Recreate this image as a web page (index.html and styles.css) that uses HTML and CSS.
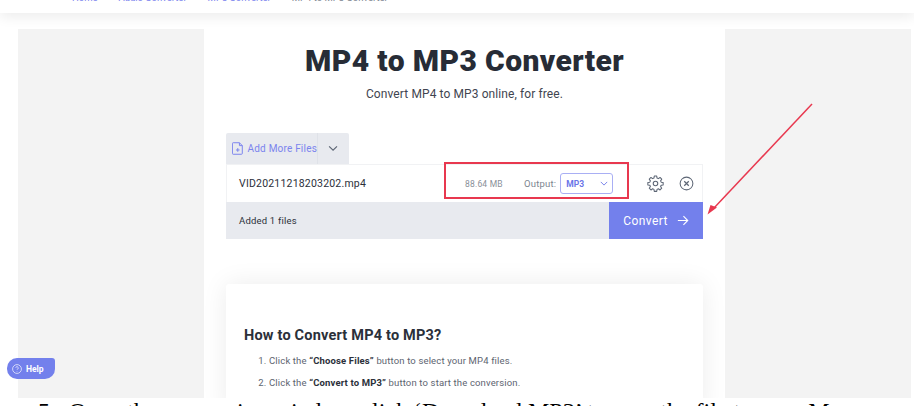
FILE: index.html
```html
<!DOCTYPE html>
<html lang="en">
<head>
  <meta charset="UTF-8" />
  <title>MP4 to MP3 Converter</title>
  <link rel="stylesheet" href="styles.css">
</head>
<body>

  <!-- Top bar, scrolled almost out of view -->
  <header class="topbar">
    <nav class="crumbs">
      <a href="#">Home</a><span>&gt;</span>
      <a href="#">Audio Converter</a><span>&gt;</span>
      <a href="#">MP3 Converter</a><span>&gt;</span>
      <em>MP4 to MP3 Converter</em>
    </nav>
  </header>

  <div class="page">
    <aside class="ad"></aside>

    <main class="center">
      <h1>MP4 to MP3 Converter</h1>
      <p class="sub">Convert MP4 to MP3 online, for free.</p>

      <div class="tool">
        <div class="add-row">
          <div class="add-btn">
            <svg class="add-icon" viewBox="0 0 14 16" width="13" height="15" fill="none" stroke="#7b84ee" stroke-width="1.2">
              <path d="M1.5 1h7.5l3.500 3.500v9.500a1 1 0 0 1-1 1h-10a1 1 0 0 1-1-1v-12a1 1 0 0 1 1-1z"/>
              <path d="M9 1v3.500h3.500M7 7.500v4.500M4.800 9.800h4.400"/>
            </svg>
            <span>Add More Files</span>
          </div>
          <div class="add-more">
            <svg viewBox="0 0 12 8" width="11" height="7" fill="none" stroke="#5d6675" stroke-width="1.3"><path d="M1 1.500l4.500 4.500 4.500-4.500"/></svg>
          </div>
        </div>

        <div class="file-row">
          <span class="file-name">VID20211218203202.mp4</span>
          <span class="file-size">88.64 MB</span>
          <span class="output-label">Output:</span>
          <div class="output-select">
            <b>MP3</b>
            <svg viewBox="0 0 10 6" width="8" height="5" fill="none" stroke="#6a75e8" stroke-width="1.1"><path d="M1 1l4 4 4-4"/></svg>
          </div>
          <svg class="gear" viewBox="0 0 24 24" width="17" height="17" fill="none" stroke="#5d6675" stroke-width="1.500" stroke-linejoin="round">
            <path d="M10.300 2h3.400l.5 2.800 1.800.8 2.400-1.600 2.400 2.400-1.600 2.400.8 1.800 2.800.5v3.400l-2.800.5-.8 1.800 1.600 2.400-2.400 2.400-2.400-1.600-1.800.8-.5 2.800h-3.400l-.5-2.800-1.800-.8-2.400 1.600-2.400-2.400 1.600-2.400-.8-1.800-2.800-.5v-3.400l2.800-.5.8-1.800-1.600-2.400 2.400-2.400 2.400 1.600 1.800-.8z" transform="translate(0 -.5)"/>
            <circle cx="12" cy="12" r="3.200"/>
          </svg>
          <svg class="close" viewBox="0 0 16 16" width="15" height="15" fill="none" stroke="#5d6675" stroke-width="1.100">
            <circle cx="8" cy="8" r="6.800"/>
            <path d="M5.600 5.600l4.800 4.800M10.400 5.600l-4.800 4.800" stroke-width="1.300"/>
          </svg>
        </div>

        <div class="status-row">
          <span>Added 1 files</span>
          <div class="convert-btn">
            Convert
            <svg viewBox="0 0 14 12" width="12" height="11" fill="none" stroke="#fff" stroke-width="1.300"><path d="M1 6h11.500M7.500 1l5 5-5 5"/></svg>
          </div>
        </div>

        <div class="red-box"></div>
      </div>

      <section class="howto">
        <h2>How to Convert MP4 to MP3?</h2>
        <ol>
          <li>Click the <strong>“Choose Files”</strong> button to select your MP4 files.</li>
          <li>Click the <strong>“Convert to MP3”</strong> button to start the conversion.</li>
        </ol>
      </section>
    </main>

    <aside class="ad"></aside>
  </div>

  <p class="doc-line"><span class="doc-num">5.</span>Open the conversion window, click ‘Download MP3’ to save the file to your M</p>

  <!-- Annotation arrow and help tab sit over the page -->
  <svg class="arrow" viewBox="0 0 914 406" width="914" height="406">
    <path d="M812 104L714 208" stroke="#e8384f" stroke-width="1.500" fill="none"/>
    <path d="M707.500 214.500L710.500 205L717 207.500z" fill="#e8384f"/>
  </svg>

  <div class="help">
    <svg viewBox="0 0 12 12" width="10" height="10" fill="none" stroke="#fff" stroke-width="0.800">
      <circle cx="6" cy="6" r="5.300"/>
      <path d="M4.500 4.700a1.500 1.500 0 1 1 2.300 1.300c-.5.300-.8.600-.8 1.100M6 8.500v.6"/>
    </svg>
    Help
  </div>

</body>
</html>
```

FILE: styles.css
```css
* {
  margin: 0;
  padding: 0;
  box-sizing: border-box;
}

html, body {
  width: 914px;
  height: 406px;
  overflow: hidden;
}

body {
  font-family: "Roboto", "Open Sans", sans-serif;
  background: #fff;
  color: #2b303a;
}

/* Top bar */
.topbar {
  height: 13px;
  background: #fff;
  box-shadow: 0 3px 14px rgba(0, 0, 0, 0.09);
  padding-left: 72px;
  display: flex;
  align-items: flex-end;
  overflow: hidden;
}

.crumbs {
  display: flex;
  gap: 8px;
  font-size: 9.500px;
  line-height: 12px;
  margin-bottom: 9px;
  white-space: nowrap;
}

.crumbs a {
  color: #7b84ee;
  text-decoration: none;
}

.crumbs span {
  color: #7d8590;
}

.crumbs em {
  font-style: normal;
  color: #7d8590;
}

/* Page columns */
.page {
  height: 385px;
  padding: 16px 3px 0 18px;
  display: flex;
}

.ad {
  width: 186px;
  background: #f3f3f3;
}

.center {
  width: 521px;
  padding: 0 22px;
  background: #fff;
  position: relative;
  overflow: hidden;
}

h1 {
  margin-top: 13px;
  font-size: 30px;
  line-height: 38px;
  font-weight: 900;
  letter-spacing: 0.4px;
  text-align: center;
  color: #272c36;
}

.sub {
  margin-top: 6px;
  font-size: 12px;
  line-height: 16px;
  letter-spacing: 0.1px;
  text-align: center;
  color: #3f4550;
}

/* Converter */
.tool {
  margin-top: 31px;
  position: relative;
}

.add-row {
  display: flex;
  height: 31px;
}

.add-btn {
  width: 92px;
  display: flex;
  align-items: center;
  gap: 4px;
  padding-left: 6px;
  background: #e8eaef;
  border-right: 1px solid #dfe2e8;
  border-radius: 2px 0 0 0;
  font-size: 10px;
  letter-spacing: 0.2px;
  white-space: nowrap;
  color: #7b84ee;
}

.add-more {
  width: 31px;
  display: flex;
  align-items: center;
  justify-content: center;
  background: #e8eaef;
  border-radius: 0 2px 0 0;
}

.file-row {
  height: 38px;
  display: flex;
  align-items: center;
  border: 1px solid #f1f2f4;
  border-bottom: 0;
  padding-left: 12px;
}

.file-name {
  width: 226px;
  font-size: 10.500px;
  letter-spacing: 0.2px;
  color: #2b303a;
}

.file-size {
  width: 59px;
  font-size: 8.500px;
  letter-spacing: 0.2px;
  color: #8a9099;
}

.output-label {
  font-size: 9.500px;
  letter-spacing: 0.2px;
  color: #7d8590;
  margin-right: 4px;
}

.output-select {
  width: 53px;
  height: 21px;
  display: flex;
  align-items: center;
  justify-content: space-between;
  padding: 0 4px 0 5px;
  border: 1px solid #a9aff4;
  border-radius: 3px;
  font-size: 8.500px;
  color: #6a75e8;
}

.gear {
  margin-left: 34px;
}

.close {
  margin-left: 15px;
}

.status-row {
  height: 37px;
  display: flex;
  align-items: center;
  justify-content: space-between;
  padding-left: 13px;
  background: #e8eaef;
  font-size: 9.500px;
  letter-spacing: 0.2px;
  color: #2b303a;
}

.convert-btn {
  width: 94px;
  height: 37px;
  display: flex;
  align-items: center;
  justify-content: center;
  gap: 9px;
  background: #7380ec;
  color: #fff;
  font-size: 12px;
  letter-spacing: 0.4px;
}

/* Red annotation drawn around size and output */
.red-box {
  position: absolute;
  left: 218px;
  top: 29px;
  width: 185px;
  height: 37px;
  border: 2px solid #e8384f;
}

/* Instructions card */
.howto {
  margin-top: 45px;
  height: 130px;
  padding: 43px 18px 0;
  background: #fff;
  box-shadow: 0 0 26px rgba(0, 0, 0, 0.08);
  border-radius: 3px;
}

h2 {
  font-size: 14.500px;
  line-height: 18px;
  font-weight: 700;
  letter-spacing: 0.2px;
  color: #2b303a;
}

ol {
  margin-top: 10px;
  padding-left: 25px;
  font-size: 9.500px;
  letter-spacing: 0.15px;
  color: #5d6470;
}

li {
  line-height: 12px;
  margin-bottom: 10px;
}

li strong {
  color: #2b303a;
}

/* Line of the surrounding document */
.doc-line {
  height: 8px;
  padding: 2px 0 0 38px;
  font-family: "Liberation Serif", serif;
  font-size: 24px;
  line-height: 22px;
  color: #000;
  white-space: nowrap;
}

.doc-num {
  margin-right: 13px;
}

.arrow {
  position: absolute;
  left: 0;
  top: 0;
  pointer-events: none;
}

.help {
  position: absolute;
  left: 7px;
  top: 358px;
  width: 48px;
  height: 21px;
  display: flex;
  align-items: center;
  gap: 4px;
  padding-left: 5px;
  background: #7380ec;
  border-radius: 10px 3px 10px 10px;
  color: #fff;
  font-size: 8.500px;
  font-weight: 700;
}
```
